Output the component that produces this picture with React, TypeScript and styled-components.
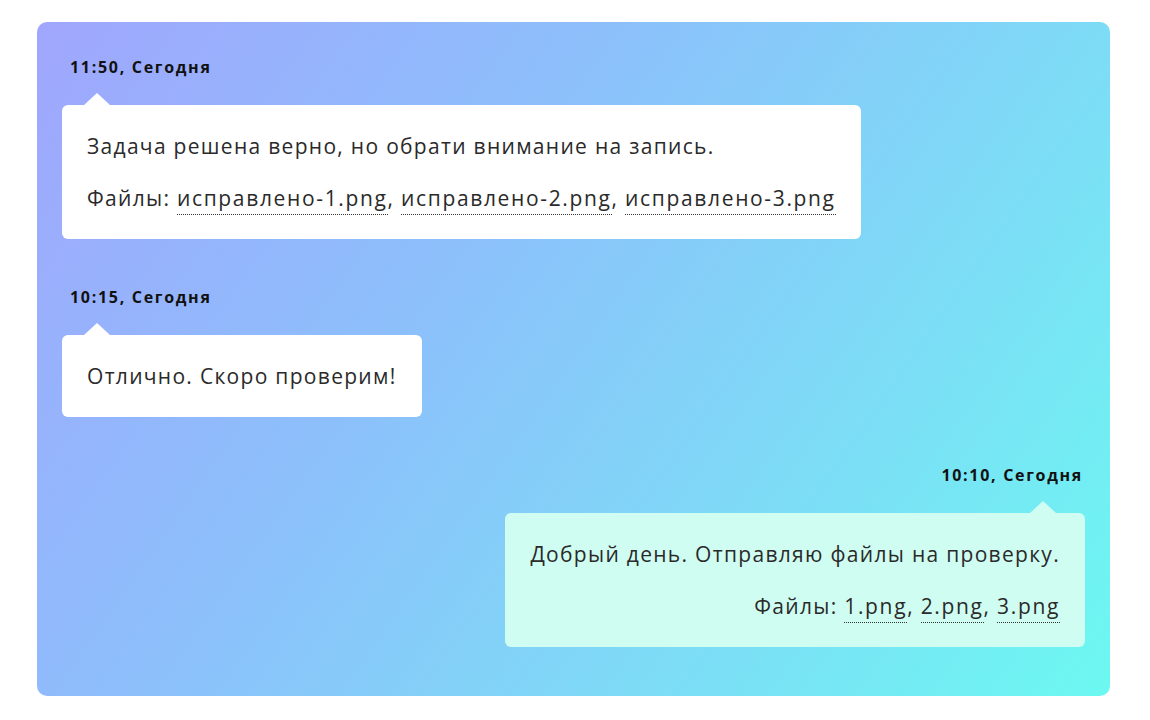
import React from "react";
import styled, { createGlobalStyle } from "styled-components";

const Global = createGlobalStyle`
  html, body { margin: 0; padding: 0; background: #ffffff; }
  body { font-family: "Open Sans", "Noto Sans", sans-serif; color: #222; }
`;

const Page = styled.div`
  width: 1150px;
  height: 720px;
  padding: 22px 40px 24px 37px;
  box-sizing: border-box;
`;

const Chat = styled.div`
  height: 674px;
  width: 1073px;
  box-sizing: border-box;
  border-radius: 10px;
  background: linear-gradient(125deg, #a0a6fd 0%, #8cc0fb 38%, #7ddcf6 70%, #6cf8f1 100%);
  padding: 35px 25px 49px 25px;
  display: flex;
  flex-direction: column;
`;

const Message = styled.div<{ $mine?: boolean }>`
  display: flex;
  flex-direction: column;
  align-items: ${(p) => (p.$mine ? "flex-end" : "flex-start")};
  & + & { margin-top: 48px; }
`;

const Stamp = styled.div<{ $mine?: boolean }>`
  font-family: "Open Sans", sans-serif;
  font-weight: 700;
  font-size: 16px;
  letter-spacing: 1.7px;
  line-height: 20px;
  color: #111;
  padding: ${(p) => (p.$mine ? "0 2px 0 0" : "0 0 0 8px")};
  margin-bottom: 28px;
`;

const Bubble = styled.div<{ $mine?: boolean }>`
  position: relative;
  background: ${(p) => (p.$mine ? "#d0fdf2" : "#ffffff")};
  border-radius: 6px;
  padding: 28px 25px;
  text-align: ${(p) => (p.$mine ? "right" : "left")};
  &::before {
    content: "";
    position: absolute;
    top: -12px;
    ${(p) => (p.$mine ? "right: 29px;" : "left: 22px;")}
    width: 0;
    height: 0;
    border-left: 13px solid transparent;
    border-right: 13px solid transparent;
    border-bottom: 12px solid ${(p) => (p.$mine ? "#d0fdf2" : "#ffffff")};
  }
`;

const Line = styled.p`
  margin: 0;
  font-size: 21px;
  letter-spacing: 1.3px;
  line-height: 26px;
  color: #2a2a2a;
  white-space: nowrap;
  & + & { margin-top: 26px; }
`;

const File = styled.span`
  letter-spacing: 1.65px;
  border-bottom: 1px dotted #333;
  padding-bottom: 2px;
`;

const Files: React.FC<{ names: string[] }> = ({ names }) => (
  <Line>
    Файлы:{" "}
    {names.map((n, i) => (
      <React.Fragment key={n}>
        <File>{n}</File>
        {i < names.length - 1 ? ", " : ""}
      </React.Fragment>
    ))}
  </Line>
);

export default function App() {
  return (
    <>
      <Global />
      <Page>
        <Chat>
          <Message>
            <Stamp>11:50, Сегодня</Stamp>
            <Bubble>
              <Line>Задача решена верно, но обрати внимание на запись.</Line>
              <Files names={["исправлено-1.png", "исправлено-2.png", "исправлено-3.png"]} />
            </Bubble>
          </Message>
          <Message>
            <Stamp>10:15, Сегодня</Stamp>
            <Bubble>
              <Line>Отлично. Скоро проверим!</Line>
            </Bubble>
          </Message>
          <Message $mine>
            <Stamp $mine>10:10, Сегодня</Stamp>
            <Bubble $mine>
              <Line>Добрый день. Отправляю файлы на проверку.</Line>
              <Files names={["1.png", "2.png", "3.png"]} />
            </Bubble>
          </Message>
        </Chat>
      </Page>
    </>
  );
}
